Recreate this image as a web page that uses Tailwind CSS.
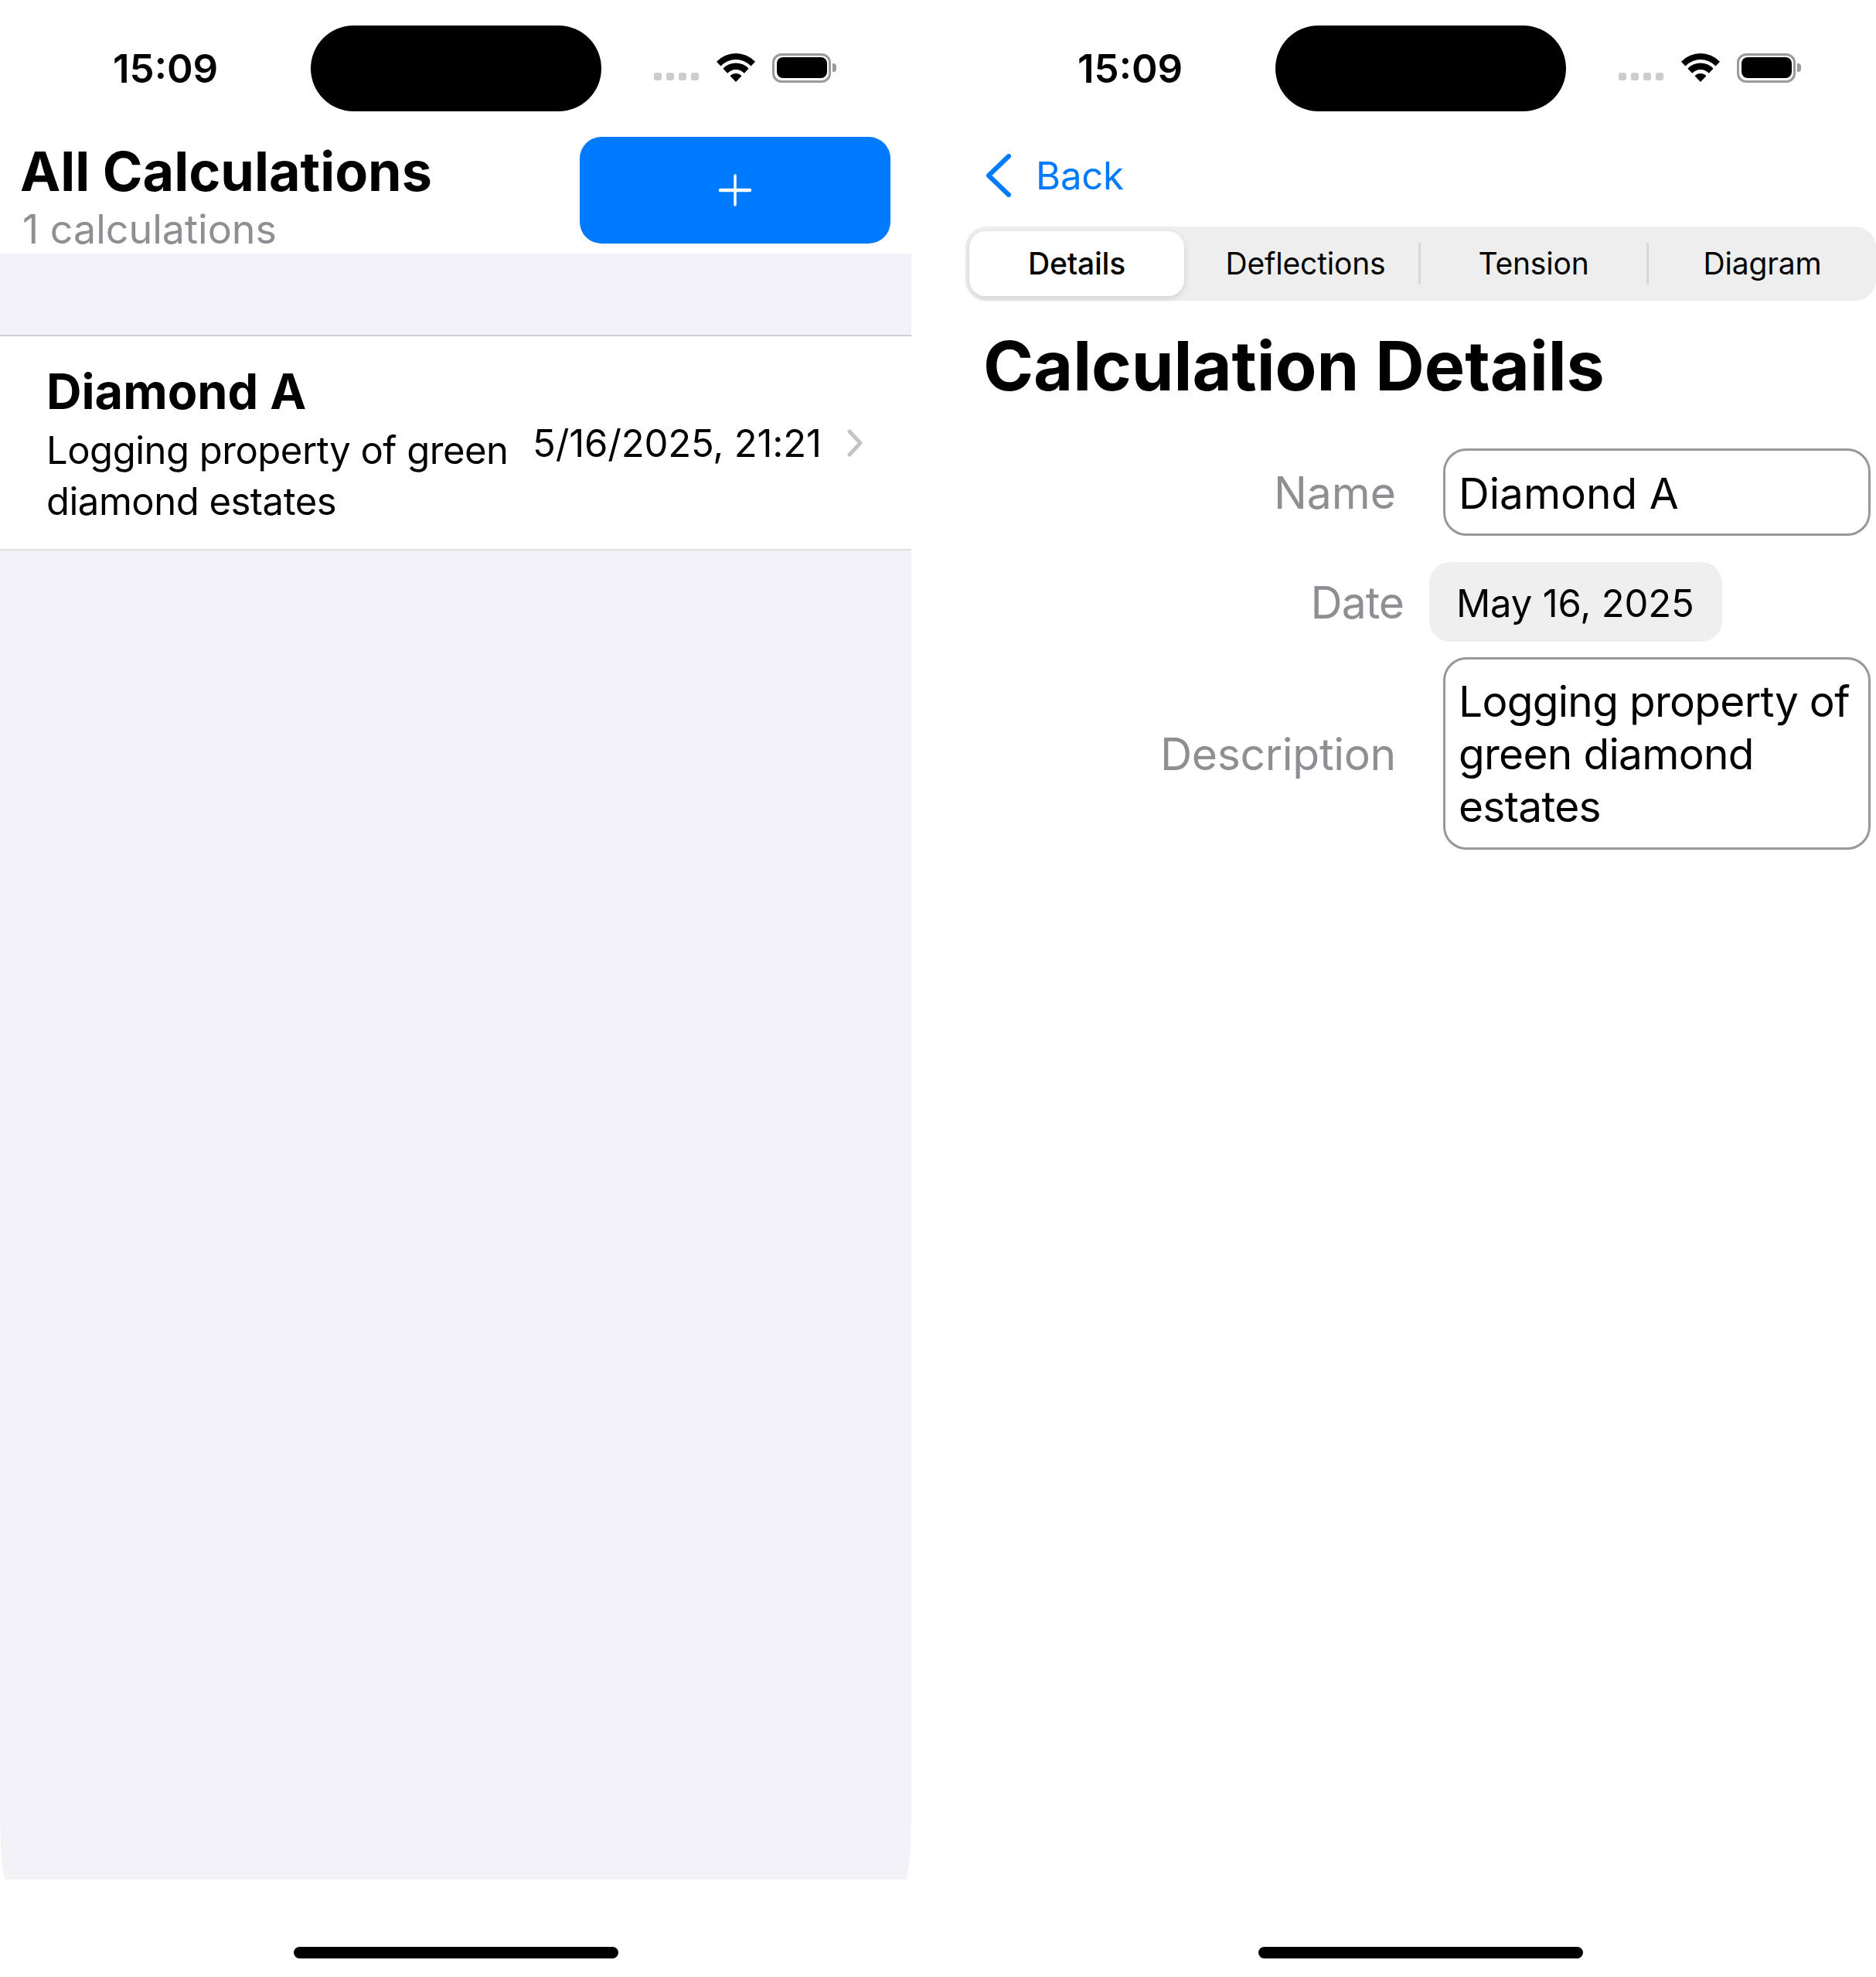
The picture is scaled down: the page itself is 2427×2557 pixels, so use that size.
<!DOCTYPE html>
<html lang="en">
<head>
<meta charset="utf-8">
<title>All Calculations</title>
<script src="https://cdn.jsdelivr.net/npm/@tailwindcss/browser@4"></script>
</head>
<body class="bg-white text-black font-['Inter',sans-serif]">
<div class="flex w-[2427px] h-[2557px] gap-[69px] overflow-hidden">

	<!-- list screen -->
	<section class="flex flex-col w-[1179px] h-full">
		<div class="flex items-center shrink-0 h-[111px] mt-[33px] mb-[33px] pl-[146px]">
			<span class="w-[256px] text-[51px] leading-[61px] font-semibold">15:09</span>
			<div class="w-[376px] h-[111px] rounded-[56px] bg-black"></div>
			<div class="flex gap-[6px] ml-[68px] mt-[20px]">
				<i class="block size-[10px] rounded-[3px] bg-[#cccccc]"></i>
				<i class="block size-[10px] rounded-[3px] bg-[#cccccc]"></i>
				<i class="block size-[10px] rounded-[3px] bg-[#cccccc]"></i>
				<i class="block size-[10px] rounded-[3px] bg-[#cccccc]"></i>
			</div>
			<svg class="ml-[23px] -mt-[2px]" width="50" height="37" viewBox="-1.16 0 52.32 37" preserveAspectRatio="none"><path d="M-1.16 10.84A37 37 0 0 1 51.16 10.84L45.5 16.5A29 29 0 0 0 4.5 16.5Z M7.68 19.68A24.5 24.5 0 0 1 42.32 19.68L36.31 25.69A16 16 0 0 0 13.69 25.69Z M17.22 29.22A11 11 0 0 1 32.78 29.22L25 37Z"/></svg>
			<div class="flex items-center ml-[22px] -mt-[2px]">
				<div class="flex items-center justify-center w-[76px] h-[38px] rounded-[12px] border-[3px] border-[#9a9a9a]">
					<div class="w-[65px] h-[27px] rounded-[8px] bg-black"></div>
				</div>
				<div class="w-[5px] h-[11px] ml-[2px] rounded-r-[4px] bg-[#9a9a9a]"></div>
			</div>
		</div>

		<header class="flex justify-between shrink-0 h-[151px] pl-[26px] pr-[27px]">
			<div class="pt-[2px]">
				<h1 class="text-[70px] leading-[86px] font-bold">All Calculations</h1>
				<p class="ml-[3px] text-[52px] leading-[64px] text-[#8e8e93]">1 calculations</p>
			</div>
			<button class="flex items-center justify-center w-[402px] h-[138px] rounded-[28px] bg-[#007aff]">
				<svg width="42" height="42" viewBox="0 0 42 42" fill="none" stroke="#fff" stroke-linecap="round"><path stroke-width="4.5" d="M2 21H40"/><path stroke-width="3.5" d="M21 2V40"/></svg>
			</button>
		</header>

		<div class="flex-1 pt-[105px] bg-[#f2f2f7] rounded-bl-[8px_90px] rounded-br-[8px_90px]">
			<div class="flex items-center pl-[60px] pt-[32px] pb-[28px] bg-white border-t-2 border-t-[#d0d0d4] border-b-2 border-b-[#dedee0]">
				<div class="w-[630px] shrink-0">
					<h2 class="text-[63px] leading-[78px] font-bold">Diamond A</h2>
					<p class="w-[610px] mt-[5px] text-[49px] leading-[66px] tracking-[-0.5px]">Logging property of green diamond estates</p>
				</div>
				<span class="w-[406px] shrink-0 mb-[3px] -ml-[1px] text-[49px] leading-[61px] tracking-[-0.15px]">5/16/2025, 21:21</span>
				<svg class="mb-[3px]" width="22" height="36" viewBox="0 0 22 36" fill="none" stroke="#c4c4c6" stroke-width="5" stroke-linecap="round" stroke-linejoin="round"><path d="M4 3L18 18L4 33"/></svg>
			</div>
		</div>

		<div class="shrink-0 h-[126px] pt-[87px]">
			<div class="w-[420px] h-[15px] mx-auto rounded-full bg-black"></div>
		</div>
	</section>

	<!-- details screen -->
	<section class="flex flex-col w-[1179px] h-full">
		<div class="flex items-center shrink-0 h-[111px] mt-[33px] mb-[33px] pl-[146px]">
			<span class="w-[256px] text-[51px] leading-[61px] font-semibold">15:09</span>
			<div class="w-[376px] h-[111px] rounded-[56px] bg-black"></div>
			<div class="flex gap-[6px] ml-[68px] mt-[20px]">
				<i class="block size-[10px] rounded-[3px] bg-[#cccccc]"></i>
				<i class="block size-[10px] rounded-[3px] bg-[#cccccc]"></i>
				<i class="block size-[10px] rounded-[3px] bg-[#cccccc]"></i>
				<i class="block size-[10px] rounded-[3px] bg-[#cccccc]"></i>
			</div>
			<svg class="ml-[23px] -mt-[2px]" width="50" height="37" viewBox="-1.16 0 52.32 37" preserveAspectRatio="none"><path d="M-1.16 10.84A37 37 0 0 1 51.16 10.84L45.5 16.5A29 29 0 0 0 4.5 16.5Z M7.68 19.68A24.5 24.5 0 0 1 42.32 19.68L36.31 25.69A16 16 0 0 0 13.69 25.69Z M17.22 29.22A11 11 0 0 1 32.78 29.22L25 37Z"/></svg>
			<div class="flex items-center ml-[22px] -mt-[2px]">
				<div class="flex items-center justify-center w-[76px] h-[38px] rounded-[12px] border-[3px] border-[#9a9a9a]">
					<div class="w-[65px] h-[27px] rounded-[8px] bg-black"></div>
				</div>
				<div class="w-[5px] h-[11px] ml-[2px] rounded-r-[4px] bg-[#9a9a9a]"></div>
			</div>
		</div>

		<nav class="flex items-center shrink-0 h-[100px] pl-[27px] text-[#007aff]">
			<svg width="34" height="56" viewBox="0 0 34 56" fill="none" stroke="#007aff" stroke-width="6" stroke-linecap="round" stroke-linejoin="round"><path d="M30 3L4 28L30 53"/></svg>
			<span class="ml-[31px] text-[49px] leading-[61px] tracking-[-0.15px]">Back</span>
		</nav>

		<div class="flex items-center shrink-0 w-[1178px] h-[96px] mt-[16px] ml-[1px] rounded-[27px] bg-[#eeeeef] text-[39px] tracking-[-0.2px]">
			<div class="w-[278px] h-[84px] ml-[5px] mr-[11px] flex items-center justify-center rounded-[21px] bg-white shadow-[0_3px_8px_rgba(0,0,0,0.12)] font-medium">Details</div>
			<div class="w-[292px] flex items-center justify-center">Deflections</div>
			<div class="w-[3px] h-[54px] bg-[#d8d8d9]"></div>
			<div class="w-[292px] flex items-center justify-center">Tension</div>
			<div class="w-[3px] h-[54px] bg-[#d8d8d9]"></div>
			<div class="flex-1 flex items-center justify-center">Diagram</div>
		</div>

		<h1 class="mt-[30px] pl-[24px] text-[88px] leading-[108px] font-bold">Calculation Details</h1>

		<div class="flex items-center mt-[53px]">
			<label class="w-[558px] pt-[2px] text-right text-[57px] text-[#8e8e93]">Name</label>
			<div class="flex items-center w-[553px] h-[113px] ml-[61px] pl-[17px] pt-[2px] rounded-[30px] border-[3px] border-[#98989c] text-[55px] leading-[68px]">Diamond A</div>
		</div>
		<div class="flex items-center mt-[34px]">
			<label class="w-[568px] pt-[2px] text-right text-[57px] tracking-[-1px] text-[#8e8e93]">Date</label>
			<div class="flex items-center w-[379px] h-[103px] ml-[33px] pl-[35px] pt-[4px] rounded-[27px] bg-[#efeff0] text-[49px] tracking-[-0.15px]">May 16, 2025</div>
		</div>
		<div class="flex items-center mt-[20px]">
			<label class="w-[558px] pt-[2px] text-right text-[57px] tracking-[-0.3px] text-[#8e8e93]">Description</label>
			<div class="w-[553px] h-[249px] ml-[61px] pl-[17px] pt-[20px] rounded-[30px] border-[3px] border-[#98989c] text-[55px] leading-[68px] tracking-[-0.7px]">Logging property of green diamond estates</div>
		</div>

		<div class="mt-auto shrink-0 h-[126px] pt-[87px]">
			<div class="w-[420px] h-[15px] mx-auto rounded-full bg-black"></div>
		</div>
	</section>
</div>
</body>
</html>
